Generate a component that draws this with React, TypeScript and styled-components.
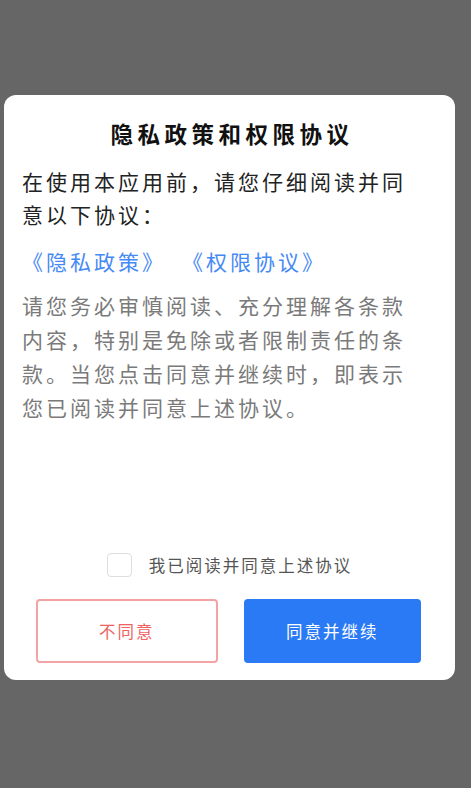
import React, { useState } from "react";
import styled, { createGlobalStyle } from "styled-components";

const FONT = `"Noto Sans CJK SC", "Noto Sans", sans-serif`;

const GlobalStyle = createGlobalStyle`
  html, body {
    margin: 0;
    padding: 0;
    background: #666666;
    font-family: ${FONT};
  }
`;

const Overlay = styled.div`
  width: 471px;
  height: 788px;
  background: #666666;
  padding-top: 95px;
  box-sizing: border-box;
`;

const Dialog = styled.div`
  margin-left: 4px;
  width: 451px;
  height: 585px;
  background: #ffffff;
  border-radius: 12px;
  display: flex;
  flex-direction: column;
  box-sizing: border-box;
  padding: 23px 0 17px;
`;

const Title = styled.h2`
  margin: 0;
  text-align: center;
  font-size: 22.5px;
  line-height: 30px;
  font-weight: 700;
  letter-spacing: 4.5px;
  padding-left: 5px;
  color: #111111;
`;

const Body = styled.div`
  padding: 0 40px 0 18px;
`;

const Intro = styled.p`
  margin: 17px 0 0;
  font-size: 21px;
  line-height: 33px;
  letter-spacing: 3px;
  color: #222222;
`;

const Links = styled.div`
  display: flex;
  gap: 16px;
  margin-top: 14px;
`;

const DocLink = styled.a`
  font-size: 21px;
  line-height: 33px;
  letter-spacing: 3px;
  color: #4589f5;
  text-decoration: none;
  cursor: pointer;
`;

const Notice = styled.p`
  margin: 10px 0 0;
  font-size: 21px;
  line-height: 34px;
  letter-spacing: 3px;
  color: #7a7a7a;
`;

const Spacer = styled.div`
  flex: 1;
`;

const AgreeRow = styled.label`
  display: flex;
  justify-content: center;
  align-items: center;
  gap: 17px;
  height: 26px;
  cursor: pointer;
`;

const Box = styled.span<{ checked: boolean }>`
  width: 25px;
  height: 24px;
  box-sizing: border-box;
  border: 1.5px solid ${(p) => (p.checked ? "#2b7af5" : "#dddddd")};
  background: ${(p) => (p.checked ? "#2b7af5" : "#ffffff")};
  border-radius: 4px;
`;

const AgreeText = styled.span`
  font-size: 16.5px;
  letter-spacing: 2px;
  color: #555555;
`;

const Buttons = styled.div`
  display: flex;
  gap: 26px;
  padding: 0 34px 0 32px;
  margin-top: 21px;
`;

const Button = styled.button<{ primary?: boolean }>`
  flex: 1;
  height: 64px;
  border-radius: 4px;
  font-family: ${FONT};
  font-size: 16.5px;
  letter-spacing: 2px;
  cursor: pointer;
  box-sizing: border-box;
  border: ${(p) => (p.primary ? "none" : "2px solid #f3a3a3")};
  background: ${(p) => (p.primary ? "#2b7af5" : "#ffffff")};
  color: ${(p) => (p.primary ? "#ffffff" : "#f06262")};
`;

export default function App() {
  const [checked, setChecked] = useState(false);
  return (
    <>
      <GlobalStyle />
      <Overlay>
        <Dialog>
          <Title>隐私政策和权限协议</Title>
          <Body>
            <Intro>在使用本应用前，请您仔细阅读并同意以下协议：</Intro>
            <Links>
              <DocLink>《隐私政策》</DocLink>
              <DocLink>《权限协议》</DocLink>
            </Links>
            <Notice>
              请您务必审慎阅读、充分理解各条款内容，特别是免除或者限制责任的条款。当您点击同意并继续时，即表示您已阅读并同意上述协议。
            </Notice>
          </Body>
          <Spacer />
          <AgreeRow onClick={() => setChecked(!checked)}>
            <Box checked={checked} />
            <AgreeText>我已阅读并同意上述协议</AgreeText>
          </AgreeRow>
          <Buttons>
            <Button>不同意</Button>
            <Button primary>同意并继续</Button>
          </Buttons>
        </Dialog>
      </Overlay>
    </>
  );
}
